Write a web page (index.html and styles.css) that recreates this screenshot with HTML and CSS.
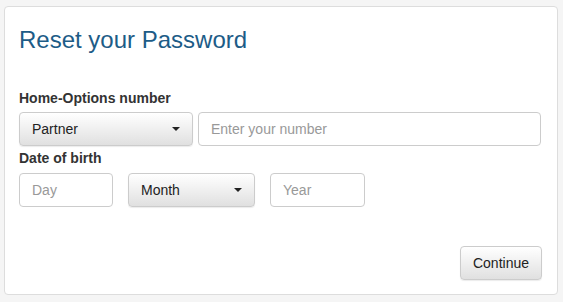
FILE: index.html
```html
<!DOCTYPE html>
<html lang="en">
<head>
    <meta charset="UTF-8">
    <title>Reset your Password</title>
    <link rel="stylesheet" href="styles.css">
</head>
<body>
    <div class="reset-panel">
        <h1>Reset your Password</h1>

        <div class="field-group">
            <label>Home-Options number</label>
            <div class="row">
                <div class="select-btn select-partner">Partner <span class="caret"></span></div>
                <input type="text" class="text-input number-input" placeholder="Enter your number">
            </div>
        </div>

        <div class="field-group">
            <label>Date of birth</label>
            <div class="row dob-row">
                <input type="text" class="text-input day-input" placeholder="Day">
                <div class="select-btn select-month">Month <span class="caret"></span></div>
                <input type="text" class="text-input year-input" placeholder="Year">
            </div>
        </div>

        <div class="actions">
            <button class="continue-btn">Continue</button>
        </div>
    </div>
</body>
</html>
```

FILE: styles.css
```css
html, body {
    margin: 0;
    background: #f5f5f5;
}
body {
    padding: 6px 6px 6px 4px;
    font-family: 'Liberation Sans', Arial, sans-serif;
    color: #333;
}
.reset-panel {
    width: 522px;
    height: 257px;
    background: #fff;
    border: 1px solid #ddd;
    border-radius: 4px;
    padding: 16px 16px 14px 14px;
    position: relative;
}
h1 {
    margin: 0 0 33px;
    font-size: 24px;
    font-weight: normal;
    color: #1d5c87;
    line-height: 34px;
}
.field-group label {
    display: block;
    font-size: 14px;
    font-weight: bold;
    line-height: 16px;
    margin-bottom: 6px;
}
.row {
    display: flex;
    gap: 5px;
    margin-bottom: 4px;
}
.dob-row {
    gap: 15px;
    margin-top: 7px;
}
.select-btn {
    box-sizing: border-box;
    height: 34px;
    border: 1px solid #ccc;
    border-radius: 4px;
    background: linear-gradient(#fff, #e0e0e0);
    box-shadow: 0 1px 1px rgba(0,0,0,0.08);
    font-size: 14px;
    line-height: 32px;
    padding: 0 12px;
    display: flex;
    justify-content: space-between;
    align-items: center;
    color: #222;
}
.caret {
    width: 0;
    height: 0;
    border-left: 4px solid transparent;
    border-right: 4px solid transparent;
    border-top: 4px solid #222;
}
.select-partner { width: 174px; }
.select-month { width: 127px; }
.text-input {
    box-sizing: border-box;
    height: 34px;
    border: 1px solid #ccc;
    border-radius: 4px;
    padding: 0 12px;
    font-family: inherit;
    font-size: 14px;
    color: #555;
    outline: none;
}
.text-input::placeholder { color: #999; }
.number-input { flex: 1; }
.day-input { width: 94px; }
.year-input { width: 95px; }
.actions {
    position: absolute;
    right: 15px;
    bottom: 14px;
}
.continue-btn {
    height: 34px;
    padding: 0 12px;
    border: 1px solid #ccc;
    border-radius: 4px;
    background: linear-gradient(#fff, #e0e0e0);
    box-shadow: 0 1px 1px rgba(0,0,0,0.08);
    font-family: inherit;
    font-size: 14px;
    color: #222;
}
```
